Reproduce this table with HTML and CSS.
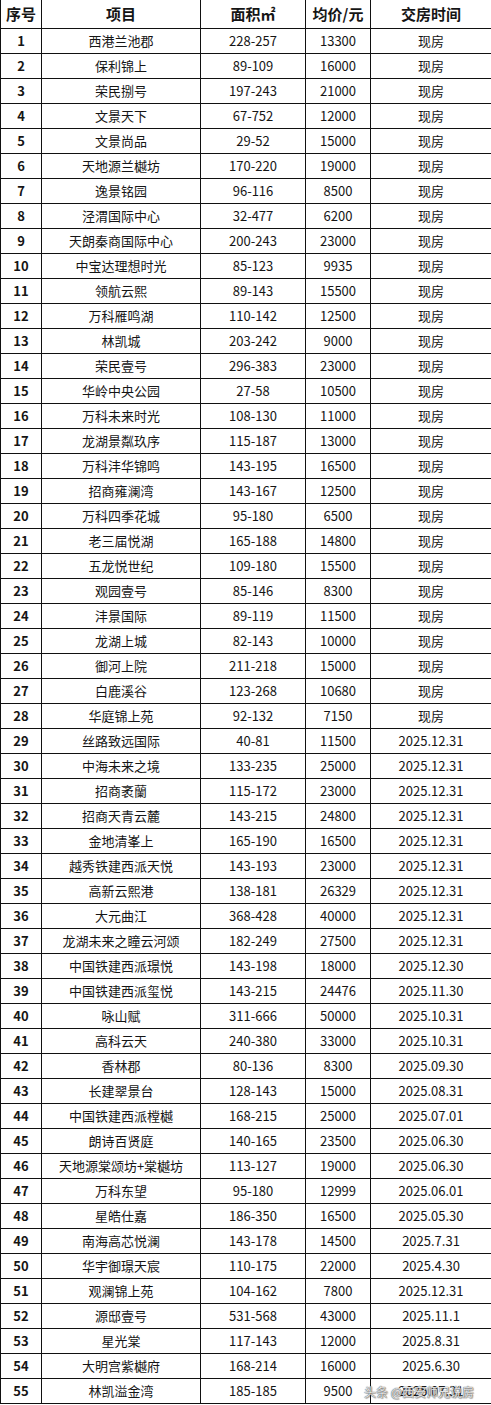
FILE: index.html
```html
<!DOCTYPE html>
<html lang="zh-CN">
<head>
<meta charset="utf-8">
<title>项目列表</title>
<link rel="stylesheet" href="styles.css">
</head>
<body>
<div class="sheet">
<table class="grid">
<colgroup>
<col class="c-no"><col class="c-name"><col class="c-area"><col class="c-price"><col class="c-date">
</colgroup>
<thead>
<tr><th>序号</th><th>项目</th><th>面积㎡</th><th>均价/元</th><th>交房时间</th></tr>
</thead>
<tbody>
<tr><td class="no">1</td><td>西港兰池郡</td><td>228-257</td><td>13300</td><td>现房</td></tr>
<tr><td class="no">2</td><td>保利锦上</td><td>89-109</td><td>16000</td><td>现房</td></tr>
<tr><td class="no">3</td><td>荣民捌号</td><td>197-243</td><td>21000</td><td>现房</td></tr>
<tr><td class="no">4</td><td>文景天下</td><td>67-752</td><td>12000</td><td>现房</td></tr>
<tr><td class="no">5</td><td>文景尚品</td><td>29-52</td><td>15000</td><td>现房</td></tr>
<tr><td class="no">6</td><td>天地源兰樾坊</td><td>170-220</td><td>19000</td><td>现房</td></tr>
<tr><td class="no">7</td><td>逸景铭园</td><td>96-116</td><td>8500</td><td>现房</td></tr>
<tr><td class="no">8</td><td>泾渭国际中心</td><td>32-477</td><td>6200</td><td>现房</td></tr>
<tr><td class="no">9</td><td>天朗秦商国际中心</td><td>200-243</td><td>23000</td><td>现房</td></tr>
<tr><td class="no">10</td><td>中宝达理想时光</td><td>85-123</td><td>9935</td><td>现房</td></tr>
<tr><td class="no">11</td><td>领航云熙</td><td>89-143</td><td>15500</td><td>现房</td></tr>
<tr><td class="no">12</td><td>万科雁鸣湖</td><td>110-142</td><td>12500</td><td>现房</td></tr>
<tr><td class="no">13</td><td>林凯城</td><td>203-242</td><td>9000</td><td>现房</td></tr>
<tr><td class="no">14</td><td>荣民壹号</td><td>296-383</td><td>23000</td><td>现房</td></tr>
<tr><td class="no">15</td><td>华岭中央公园</td><td>27-58</td><td>10500</td><td>现房</td></tr>
<tr><td class="no">16</td><td>万科未来时光</td><td>108-130</td><td>11000</td><td>现房</td></tr>
<tr><td class="no">17</td><td>龙湖景粼玖序</td><td>115-187</td><td>13000</td><td>现房</td></tr>
<tr><td class="no">18</td><td>万科沣华锦鸣</td><td>143-195</td><td>16500</td><td>现房</td></tr>
<tr><td class="no">19</td><td>招商雍澜湾</td><td>143-167</td><td>12500</td><td>现房</td></tr>
<tr><td class="no">20</td><td>万科四季花城</td><td>95-180</td><td>6500</td><td>现房</td></tr>
<tr><td class="no">21</td><td>老三届悦湖</td><td>165-188</td><td>14800</td><td>现房</td></tr>
<tr><td class="no">22</td><td>五龙悦世纪</td><td>109-180</td><td>15500</td><td>现房</td></tr>
<tr><td class="no">23</td><td>观园壹号</td><td>85-146</td><td>8300</td><td>现房</td></tr>
<tr><td class="no">24</td><td>沣景国际</td><td>89-119</td><td>11500</td><td>现房</td></tr>
<tr><td class="no">25</td><td>龙湖上城</td><td>82-143</td><td>10000</td><td>现房</td></tr>
<tr><td class="no">26</td><td>御河上院</td><td>211-218</td><td>15000</td><td>现房</td></tr>
<tr><td class="no">27</td><td>白鹿溪谷</td><td>123-268</td><td>10680</td><td>现房</td></tr>
<tr><td class="no">28</td><td>华庭锦上苑</td><td>92-132</td><td>7150</td><td>现房</td></tr>
<tr><td class="no">29</td><td>丝路致远国际</td><td>40-81</td><td>11500</td><td>2025.12.31</td></tr>
<tr><td class="no">30</td><td>中海未来之境</td><td>133-235</td><td>25000</td><td>2025.12.31</td></tr>
<tr><td class="no">31</td><td>招商袤蘭</td><td>115-172</td><td>23000</td><td>2025.12.31</td></tr>
<tr><td class="no">32</td><td>招商天青云麓</td><td>143-215</td><td>24800</td><td>2025.12.31</td></tr>
<tr><td class="no">33</td><td>金地清峯上</td><td>165-190</td><td>16500</td><td>2025.12.31</td></tr>
<tr><td class="no">34</td><td>越秀铁建西派天悦</td><td>143-193</td><td>23000</td><td>2025.12.31</td></tr>
<tr><td class="no">35</td><td>高新云熙港</td><td>138-181</td><td>26329</td><td>2025.12.31</td></tr>
<tr><td class="no">36</td><td>大元曲江</td><td>368-428</td><td>40000</td><td>2025.12.31</td></tr>
<tr><td class="no">37</td><td>龙湖未来之瞳云河颂</td><td>182-249</td><td>27500</td><td>2025.12.31</td></tr>
<tr><td class="no">38</td><td>中国铁建西派璟悦</td><td>143-198</td><td>18000</td><td>2025.12.30</td></tr>
<tr><td class="no">39</td><td>中国铁建西派玺悦</td><td>143-215</td><td>24476</td><td>2025.11.30</td></tr>
<tr><td class="no">40</td><td>咏山赋</td><td>311-666</td><td>50000</td><td>2025.10.31</td></tr>
<tr><td class="no">41</td><td>高科云天</td><td>240-380</td><td>33000</td><td>2025.10.31</td></tr>
<tr><td class="no">42</td><td>香林郡</td><td>80-136</td><td>8300</td><td>2025.09.30</td></tr>
<tr><td class="no">43</td><td>长建翠景台</td><td>128-143</td><td>15000</td><td>2025.08.31</td></tr>
<tr><td class="no">44</td><td>中国铁建西派樘樾</td><td>168-215</td><td>25000</td><td>2025.07.01</td></tr>
<tr><td class="no">45</td><td>朗诗百贤庭</td><td>140-165</td><td>23500</td><td>2025.06.30</td></tr>
<tr><td class="no">46</td><td>天地源棠颂坊+棠樾坊</td><td>113-127</td><td>19000</td><td>2025.06.30</td></tr>
<tr><td class="no">47</td><td>万科东望</td><td>95-180</td><td>12999</td><td>2025.06.01</td></tr>
<tr><td class="no">48</td><td>星皓仕嘉</td><td>186-350</td><td>16500</td><td>2025.05.30</td></tr>
<tr><td class="no">49</td><td>南海高芯悦澜</td><td>143-178</td><td>14500</td><td>2025.7.31</td></tr>
<tr><td class="no">50</td><td>华宇御璟天宸</td><td>110-175</td><td>22000</td><td>2025.4.30</td></tr>
<tr><td class="no">51</td><td>观澜锦上苑</td><td>104-162</td><td>7800</td><td>2025.12.31</td></tr>
<tr><td class="no">52</td><td>源邸壹号</td><td>531-568</td><td>43000</td><td>2025.11.1</td></tr>
<tr><td class="no">53</td><td>星光棠</td><td>117-143</td><td>12000</td><td>2025.8.31</td></tr>
<tr><td class="no">54</td><td>大明宫紫樾府</td><td>168-214</td><td>16000</td><td>2025.6.30</td></tr>
<tr><td class="no">55</td><td>林凯溢金湾</td><td>185-185</td><td>9500</td><td>2025.07.31</td></tr>
</tbody>
</table>
<div class="mark">头条 @西安师兄说房</div>
</div>
</body>
</html>
```

FILE: styles.css
```css
html, body {
  margin: 0;
  padding: 0;
  background: #ffffff;
}

.sheet {
  position: relative;
  width: 491px;
  height: 1405px;
  overflow: hidden;
}

.grid {
  border-collapse: collapse;
  table-layout: fixed;
  width: 491px;
  font-family: "Noto Sans CJK SC", "Noto Sans", sans-serif;
  color: #151515;
}

.c-no { width: 41px; }
.c-name { width: 159px; }
.c-area { width: 105px; }
.c-price { width: 65px; }
.c-date { width: 121px; }

.grid th,
.grid td {
  border: 1px solid #111;
  padding: 0;
  text-align: center;
  vertical-align: middle;
  white-space: nowrap;
  overflow: hidden;
}

.grid th {
  border-top: none;
  height: 28px;
  font-size: 15px;
  font-weight: 700;
  line-height: 28px;
}

.grid td {
  height: 24px;
  font-size: 13px;
  line-height: 24px;
}

.grid td.no {
  font-weight: 700;
}

.mark {
  position: absolute;
  left: 364px;
  top: 1384px;
  font-family: "Noto Sans CJK SC", sans-serif;
  font-size: 12px;
  line-height: 16px;
  color: rgba(255, 255, 255, 0.85);
  text-shadow: 0 0 1px #555, 0 0 1px #555, 1px 1px 1px rgba(0,0,0,0.35);
  white-space: nowrap;
}
```
